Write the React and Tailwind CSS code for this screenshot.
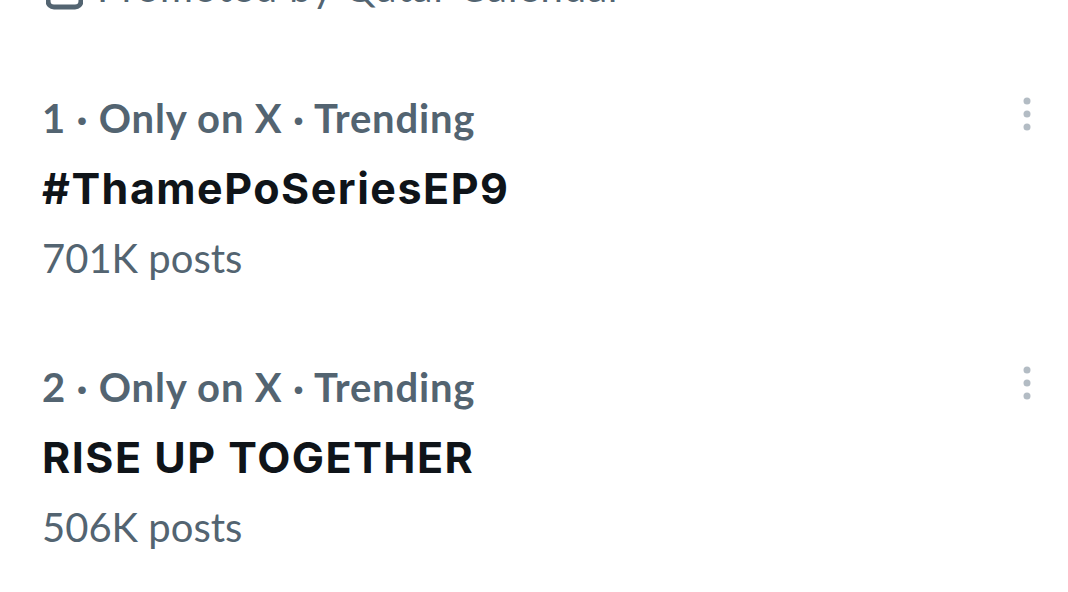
const trends = [
  { rank: 1, title: '#ThamePoSeriesEP9', posts: '701K posts' },
  { rank: 2, title: 'RISE UP TOGETHER', posts: '506K posts' },
];

function MoreIcon() {
  return (
    <svg width="10" height="36" viewBox="0 0 10 36" className="fill-[#b3bcc4]">
      <circle cx="5" cy="5" r="3.5" />
      <circle cx="5" cy="18" r="3.5" />
      <circle cx="5" cy="31" r="3.5" />
    </svg>
  );
}

export default function App() {
  return (
    <div className="w-[1068px] h-[592px] overflow-hidden bg-white font-['Lato',sans-serif]">
      <div className="-mt-[48px] h-[70px] flex items-center gap-[14px] pl-[46px] text-[40px] leading-[70px] tracking-[1px] text-[#536471] mb-[31px]">
        <svg width="37" height="60" viewBox="0 0 37 60" className="mt-[-4px]">
          <rect x="2" y="2" width="33" height="50" rx="6" fill="none" stroke="#536471" strokeWidth="5" />
        </svg>
        <span>Promoted by Qatar Calendar</span>
      </div>
      {trends.map((t) => (
        <div key={t.rank} className="flex justify-between pl-[42px] pr-[36px] pt-[30px] pb-[29px]">
          <div className="flex flex-col text-[40px] leading-[70px]">
            <span className="font-bold tracking-[0.8px] text-[#536471]">{t.rank} · Only on X · Trending</span>
            <span className="font-['Inter',sans-serif] text-[43px] font-bold tracking-[1.5px] text-[#0f1419]">{t.title}</span>
            <span className="text-[#536471]">{t.posts}</span>
          </div>
          <div className="pt-[13px]">
            <MoreIcon />
          </div>
        </div>
      ))}
    </div>
  );
}
